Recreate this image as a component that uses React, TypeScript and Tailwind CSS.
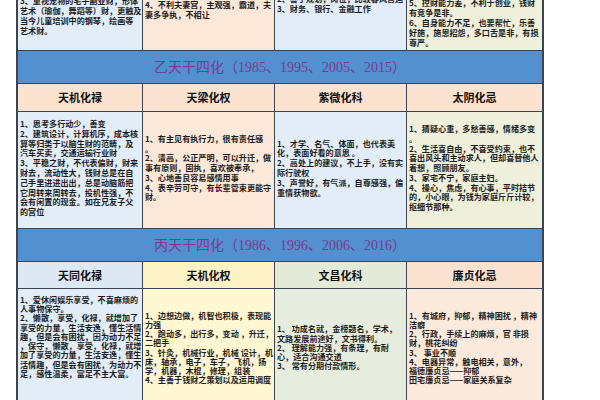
const border = "border-[#3c4352]";

type Cell = { bg: string; lines: string[]; pad?: string };

const topRow: Cell[] = [
  {
    bg: "bg-[#e3edf8]",
    pad: "pb-[14px]",
    lines: ["3、重视宠物的宅子副业财，形体", "艺术（瑜伽，舞蹈等）财，更触及", "当今儿童培训中的钢琴，绘画等", "艺术财。"],
  },
  {
    bg: "bg-[#fce8d8]",
    pad: "pb-[30px]",
    lines: ["3、对配偶有掌控欲，管得严格，", "4、不利夫妻宫，主观强，霸道，夫", "妻多争执，不相让"],
  },
  {
    bg: "bg-[#e3edf8]",
    pad: "pb-[36px]",
    lines: ["2、善于规划，岗位，比较春风营运", "3、财务、银行、金融工作"],
  },
  {
    bg: "bg-[#eef0dc]",
    pad: "pb-[2px]",
    lines: [
      "5、控财能力差，不利于创业，钱财",
      "有竞争是非。",
      "6、自身能力不足，也要帮忙，乐善",
      "好施，施恩招怨，多口舌是非，有损",
      "尊严。",
    ],
  },
];

const yiHeads = [
  { bg: "bg-[#fbe3cf]", text: "天机化禄" },
  { bg: "bg-[#fbe3cf]", text: "天梁化权" },
  { bg: "bg-[#fbe3cf]", text: "紫微化科" },
  { bg: "bg-[#fbe3cf]", text: "太阴化忌" },
];

const yiBody: Cell[] = [
  {
    bg: "bg-[#e3edf8]",
    lines: [
      "1、思考多行动少，善变",
      "2、建筑设计，计算机序，成本核",
      "算等归类于以脑生财的范畴，及",
      "汽车买卖，交通运输行业财",
      "3、平稳之财，不代表偏财，财来",
      "财去，流动性大，钱财总是在自",
      "己手里进进出出，总是动脑筋把",
      "它周转来周转去，投机性强，不",
      "会有闲置的现金。如在兄友子父",
      "的宫位",
    ],
  },
  {
    bg: "bg-[#fce8d8]",
    lines: [
      "1、有主见有执行力，很有责任感",
      "。",
      "2、清高，公正严明，可以升迁，做",
      "事有原则，固执，喜欢被奉承，",
      "3、心地善良容易感情用事",
      "4、表辛劳可守，有长辈管束更能守",
      "财。",
    ],
  },
  {
    bg: "bg-[#e3edf8]",
    lines: [
      "1、才学、名气、体面，也代表美",
      "化，表面好看的意思 。",
      "2、高处上的建议，不上手，没有实",
      "际行驶权",
      "3、声誉好，有气派，自尊感强，偏",
      "重情获物欲。",
    ],
  },
  {
    bg: "bg-[#eef0dc]",
    lines: [
      "1、猜疑心重，多愁善感，情绪多变",
      "。",
      "2、生活喜自由，不喜受约束，也不",
      "喜出风头和主动求人，但却喜替他人",
      "着想，照顾朋友。",
      "3、家宅不宁，家庭主妇。",
      "4、操心，焦虑，有心事，平时拮节",
      "的，小心眼，为钱为家庭斤斤计较，",
      "抠细节那种。",
    ],
  },
];

const bingHeads = [
  { bg: "bg-[#dce8f4]", text: "天同化禄" },
  { bg: "bg-[#fdf2c6]", text: "天机化权" },
  { bg: "bg-[#e3ebd8]", text: "文昌化科" },
  { bg: "bg-[#fae2d0]", text: "廉贞化忌" },
];

const bingBody: Cell[] = [
  {
    bg: "bg-[#e3edf8]",
    pad: "pb-[22px]",
    lines: [
      "1、爱休闲娱乐享受，不喜麻烦的",
      "人事物保守。",
      "2、懒散，享受，化禄，就增加了",
      "享受的力量，生活安逸，懂生活情",
      "趣，但是会有困扰，因为动力不足",
      "，保守，懒散，享受，化禄，就增",
      "加了享受的力量，生活安逸，懂生",
      "活情趣，但是会有困扰，为动力不",
      "足，感性温柔，富足不主大富。",
    ],
  },
  {
    bg: "bg-[#fff6d2]",
    lines: [
      "1、边想边做，机智也积极，表现能",
      "力强",
      "2、跑动多，出行多，变动 ，升迁，",
      "二把手",
      "3、针灸，机械行业，机械 设计，机",
      "床，轴承，电子，车子，飞机，扬",
      "学，机器，木棍，修理，组装",
      "4、主善于钱财之策划以及运用调度",
    ],
  },
  {
    bg: "bg-[#e6eddf]",
    lines: [
      "1、 功成名就，金榜题名，学术，",
      "文路发展前途好，文书得利。",
      "2、 理解能力强，有条理，有耐",
      "心，适合沟通交道",
      "3、 常有分期付款情形。",
    ],
  },
  {
    bg: "bg-[#fbe9db]",
    lines: [
      "1、有城府，抑郁，精神困扰 ，精神",
      "洁癖",
      "2、行政，手续上的麻烦，官 非损",
      "财，桃花纠纷",
      "3、 事业不顺",
      "4、电器异常，触电相关，意外，",
      "福德廉贞忌——抑郁",
      "田宅廉贞忌——家庭关系复杂",
    ],
  },
];

const cols = "grid grid-cols-[125px_132px_132px_135px]";

function BodyRow({ cells, height, align, leading }: { cells: Cell[]; height: string; align: string; leading: string }) {
  return (
    <div className={`${cols} ${height} border-b ${border}`}>
      {cells.map((c, i) => (
        <div
          key={i}
          className={`${c.bg} ${c.pad ?? ""} flex flex-col ${align} overflow-hidden px-[2px] ${i < 3 ? `border-r ${border}` : ""}`}
        >
          <div className={`text-[8.1px] ${leading} font-bold text-[#1d1d1d]`}>
            {c.lines.map((l, j) => (
              <div key={j} className="whitespace-nowrap">
                {l}
              </div>
            ))}
          </div>
        </div>
      ))}
    </div>
  );
}

function Banner({ text }: { text: string }) {
  return (
    <div className={`h-[33px] bg-[#5290d0] border-b ${border} flex items-center justify-center`}>
      <span
        className="text-[14px] text-[#7b3a8e]"
        style={{ fontFamily: '"Liberation Serif", "Noto Sans CJK SC", serif' }}
      >
        {text}
      </span>
    </div>
  );
}

function HeadRow({ heads, height }: { heads: { bg: string; text: string }[]; height: string }) {
  return (
    <div className={`${cols} ${height} border-b ${border}`}>
      {heads.map((h, i) => (
        <div
          key={i}
          className={`${h.bg} flex items-center justify-center text-[11px] font-bold text-[#111] ${i < 3 ? `border-r ${border}` : ""}`}
        >
          {h.text}
        </div>
      ))}
    </div>
  );
}

export default function App() {
  return (
    <div
      className="w-[600px] h-[400px] overflow-hidden bg-white"
      style={{ fontFamily: '"Noto Sans CJK SC", "Noto Sans", sans-serif' }}
    >
      <div className={`ml-[16px] w-[528px] border-x-2 ${border}`}>
        <BodyRow cells={topRow} height="h-[51px]" align="justify-end" leading="leading-[10px]" />
        <Banner text="乙天干四化（1985、1995、2005、2015）" />
        <HeadRow heads={yiHeads} height="h-[28px]" />
        <BodyRow cells={yiBody} height="h-[117px]" align="justify-center pb-[4px]" leading="leading-[9.8px]" />
        <Banner text="丙天干四化（1986、1996、2006、2016）" />
        <HeadRow heads={bingHeads} height="h-[27px]" />
        <BodyRow cells={bingBody} height="h-[118px]" align="justify-center" leading="leading-[9.2px]" />
      </div>
    </div>
  );
}
